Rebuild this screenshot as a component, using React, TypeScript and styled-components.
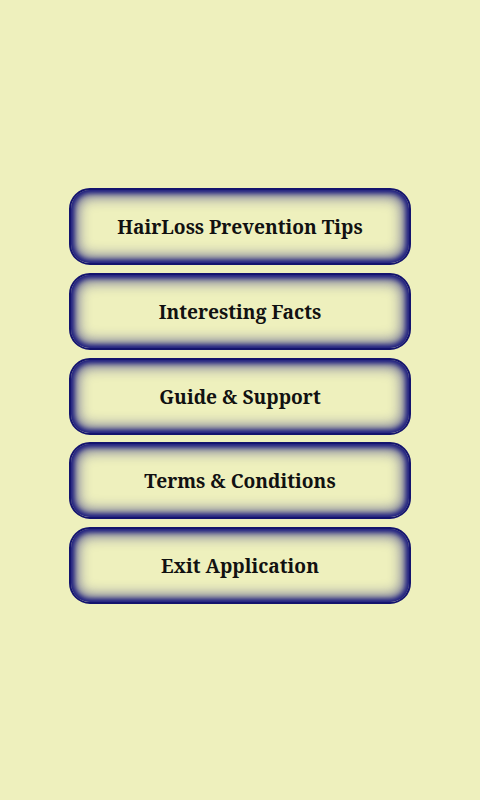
import React from "react";
import styled, { createGlobalStyle } from "styled-components";

const Global = createGlobalStyle`
  html, body { margin: 0; padding: 0; background: #eef0bd; }
  #root { height: 800px; }
`;

const Screen = styled.div`
  width: 480px;
  height: 800px;
  background: #eef0bd;
  display: flex;
  flex-direction: column;
  align-items: center;
  padding-top: 188px;
  box-sizing: border-box;
  gap: 7.75px;
`;

const MenuButton = styled.button`
  width: 342px;
  height: 77px;
  box-sizing: border-box;
  border: 2px solid #14146e;
  border-radius: 21px;
  background: #eef0bd;
  box-shadow: inset 0 0 5px 3px #1a1a7e, inset 0 0 14px 6px rgba(30, 30, 128, 0.7);
  font-family: "Noto Serif", "DejaVu Serif", "Liberation Serif", serif;
  font-weight: bold;
  font-size: 19.2px;
  color: #111;
  display: flex;
  align-items: center;
  justify-content: center;
  padding: 0;
  cursor: pointer;
`;

const items = [
  "HairLoss Prevention Tips",
  "Interesting Facts",
  "Guide & Support",
  "Terms & Conditions",
  "Exit Application",
];

export default function App() {
  return (
    <>
      <Global />
      <Screen>
        {items.map((t) => (
          <MenuButton key={t}>{t}</MenuButton>
        ))}
      </Screen>
    </>
  );
}
